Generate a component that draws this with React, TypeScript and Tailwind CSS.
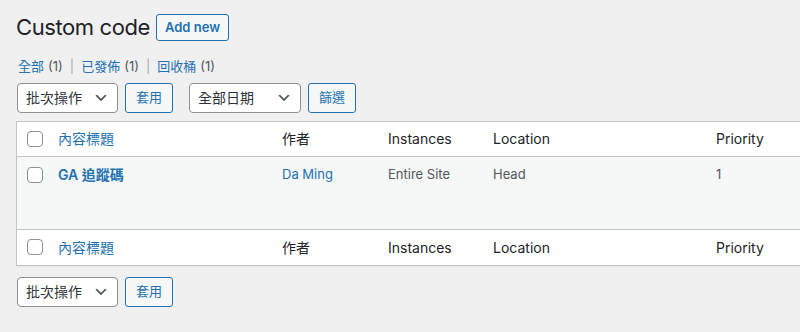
import type { ReactNode } from 'react';

const font = { fontFamily: '"Inter", "Noto Sans CJK TC", sans-serif' };

function Chevron() {
  return (
    <svg viewBox="0 0 20 20" className="h-4 w-4 shrink-0" fill="#50575e">
      <path d="M5 6l5 5 5-5 2 1-7 7-7-7 2-1z" />
    </svg>
  );
}

function Select({ label, width }: { label: string; width: string }) {
  return (
    <div
      className={`flex h-[30px] items-center justify-between rounded-[4px] border border-[#8c8f94] bg-white pl-2 pr-2 text-[14px] text-[#2c3338] ${width}`}
    >
      <span>{label}</span>
      <Chevron />
    </div>
  );
}

function SecondaryButton({ children, className = '' }: { children: ReactNode; className?: string }) {
  return (
    <button
      className={`flex h-[30px] items-center justify-center whitespace-nowrap rounded-[3px] border border-[#2271b1] bg-[#f6f7f7] px-[10px] text-[13px] text-[#2271b1] ${className}`}
    >
      {children}
    </button>
  );
}

function Checkbox() {
  return <span className="block h-4 w-4 rounded-[4px] border border-[#8c8f94] bg-white" />;
}

const cols = 'grid grid-cols-[33px_224px_106px_105px_223px_1fr]';

function HeaderRow({ border }: { border: 'bottom' | 'top' }) {
  return (
    <div
      className={`${cols} h-[35px] items-center bg-white text-[14px] text-[#1d2327] ${
        border === 'bottom' ? 'border-b border-[#c3c4c7]' : ''
      }`}
    >
      <div className="pl-[10px]">
        <Checkbox />
      </div>
      <div className="pl-2 text-[#2271b1]">內容標題</div>
      <div className="pl-2">作者</div>
      <div className="pl-2">Instances</div>
      <div className="pl-2">Location</div>
      <div className="pl-2">Priority</div>
    </div>
  );
}

export default function App() {
  return (
    <div className="h-[332px] w-[800px] overflow-hidden bg-[#f0f0f1]" style={font}>
      <div className="pl-4 pt-[13px]">
        <div className="flex items-center gap-[6px]">
          <h1 className="text-[22px] leading-[29px] font-normal tracking-[-0.4px] text-[#1d2327]">Custom code</h1>
          <button className="h-[27px] whitespace-nowrap rounded-[3px] border border-[#2271b1] bg-[#f6f7f7] px-[8px] text-[13px] font-semibold text-[#2271b1]">
            Add new
          </button>
        </div>

        <div className="mt-[15px] flex items-center pl-[2px] text-[13px] text-[#50575e]">
          <span className="text-[#2271b1]">全部</span>
          <span className="ml-1">(1)</span>
          <span className="mx-[7px] text-[#a7aaad]">|</span>
          <span className="text-[#2271b1]">已發佈</span>
          <span className="ml-1">(1)</span>
          <span className="mx-[7px] text-[#a7aaad]">|</span>
          <span className="text-[#2271b1]">回收桶</span>
          <span className="ml-1">(1)</span>
        </div>

        <div className="mt-[6px] flex items-center pl-px">
          <Select label="批次操作" width="w-[101px]" />
          <SecondaryButton className="ml-[7px]">套用</SecondaryButton>
          <Select label="全部日期" width="ml-[16px] w-[112px]" />
          <SecondaryButton className="ml-[7px]">篩選</SecondaryButton>
        </div>

        <div className="mt-[8px] w-[820px] border border-[#c3c4c7] shadow-[0_1px_1px_rgba(0,0,0,0.04)]">
          <HeaderRow border="bottom" />
          <div className={`${cols} h-[73px] items-start border-b border-[#c3c4c7] bg-[#f6f7f7] pt-[7px] text-[13px] text-[#50575e]`}>
            <div className="pl-[10px] pt-[3px]">
              <Checkbox />
            </div>
            <div className="pl-2 text-[14px] font-semibold text-[#2271b1]">GA 追蹤碼</div>
            <div className="pl-2 pt-px text-[#2271b1]">Da Ming</div>
            <div className="pl-2 pt-px">Entire Site</div>
            <div className="pl-2 pt-px">Head</div>
            <div className="pl-2 pt-px">1</div>
          </div>
          <HeaderRow border="top" />
        </div>

        <div className="mt-[11px] flex items-center pl-px">
          <Select label="批次操作" width="w-[101px]" />
          <SecondaryButton className="ml-[7px]">套用</SecondaryButton>
        </div>
      </div>
    </div>
  );
}
